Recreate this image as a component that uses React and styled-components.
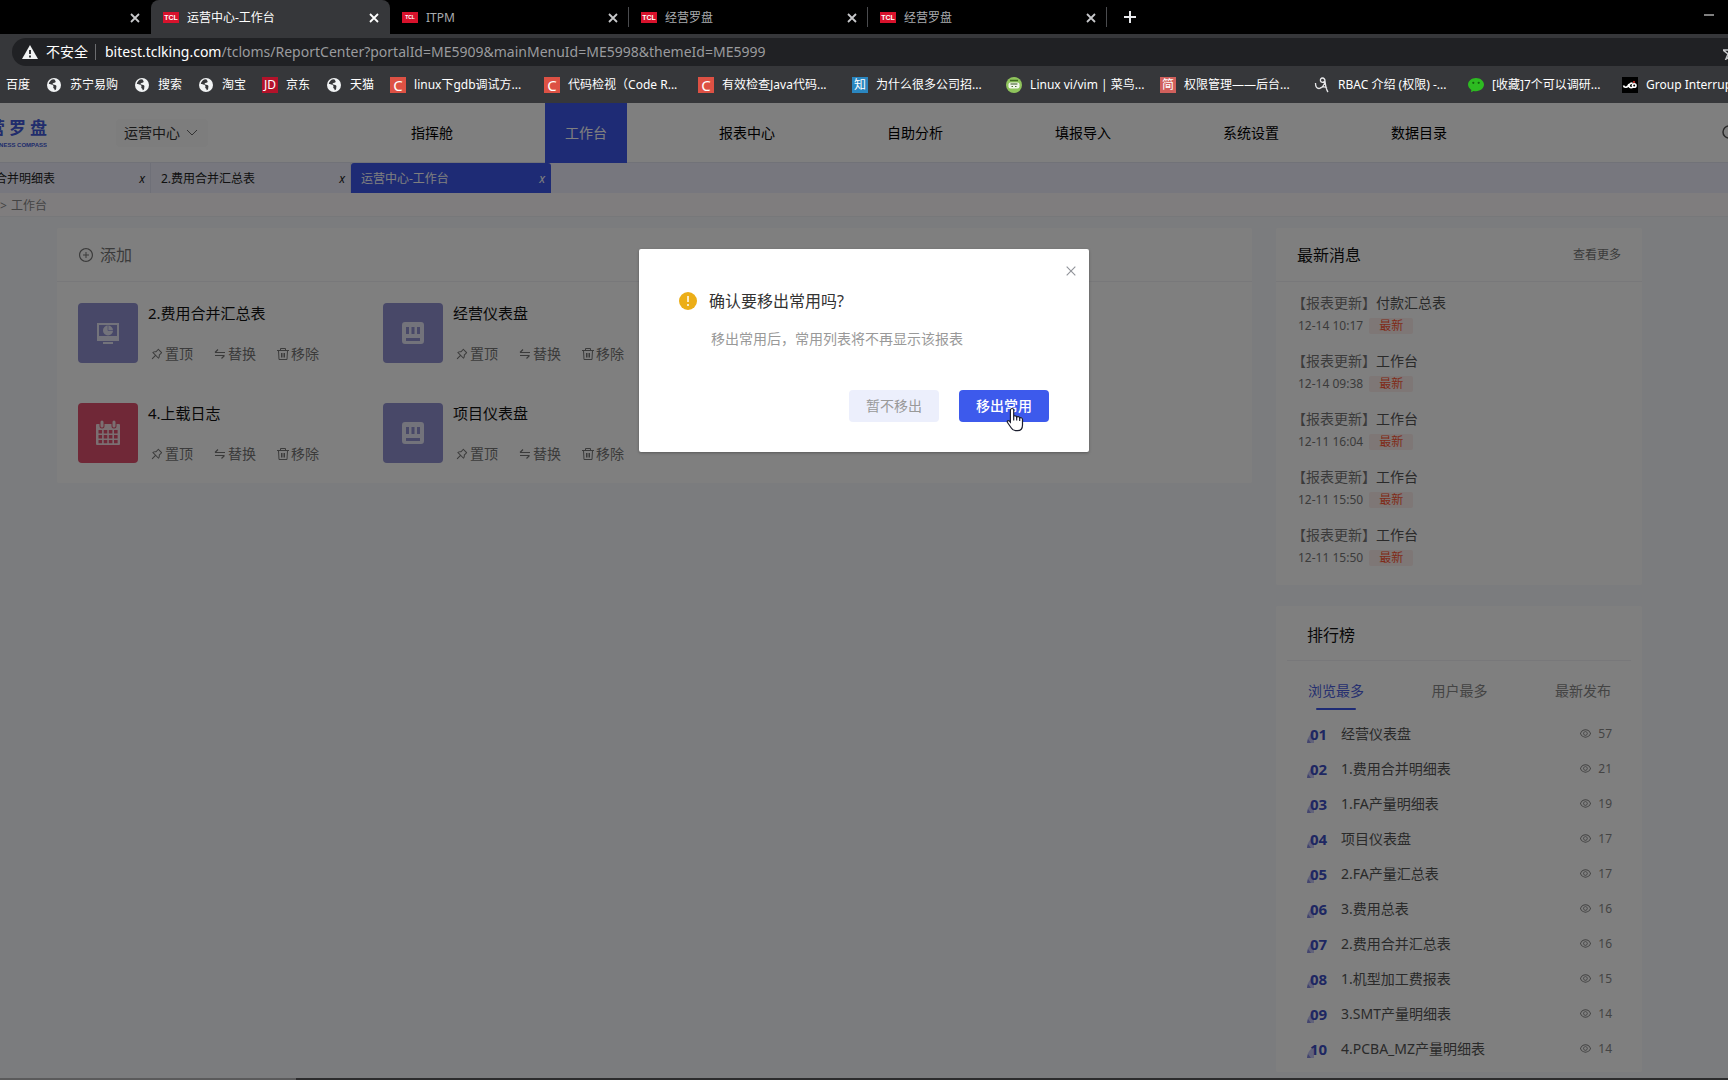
import React from 'react';
import styled, { createGlobalStyle } from 'styled-components';
import { AiOutlinePushpin, AiOutlineEye, AiOutlinePlusCircle, AiOutlineClose } from 'react-icons/ai';

const GlobalStyle = createGlobalStyle`
  * {
    box-sizing: border-box;
  }

  body {
    margin: 0;
    background: #2c2c2d;
    color: #333;
    font-family: 'Noto Sans', 'Noto Sans CJK SC', sans-serif;
    font-size: 14px;
    line-height: 20px;
    overflow: hidden;
  }

  button {
    padding: 0;
    border: 0;
    background: none;
    color: inherit;
    font: inherit;
    cursor: pointer;
  }

  a {
    color: inherit;
    text-decoration: none;
  }

  ul, ol, h2, h3, p {
    margin: 0;
    padding: 0;
    font-size: inherit;
    font-weight: inherit;
    list-style: none;
  }

  svg {
    display: block;
    flex: none;
  }
`;

const Window = styled.div`
  display: flex;
  flex-direction: column;
  min-height: 100vh;
  overflow: hidden;
`;

/* browser */

const Chrome = styled.header`
  background: #36373a;
  color: #fff;
  font-size: 12px;
  white-space: nowrap;
`;

const TabStrip = styled.div`
  display: flex;
  align-items: center;
  height: 34px;
  background: #000;
`;

const BrowserTab = styled.div`
  display: flex;
  align-items: center;
  gap: 8px;
  width: ${(p) => (p.$cut ? 151 : 239)}px;
  height: ${(p) => (p.$active ? 34 : 20)}px;
  padding: 1px 10px 0 12px;
  border-right: 1px solid ${(p) => (p.$line ? '#4a4b4e' : 'transparent')};
  border-radius: ${(p) => (p.$active ? '8px 8px 0 0' : '0')};
  background: ${(p) => (p.$active ? '#36373a' : 'transparent')};
  color: ${(p) => (p.$active ? '#fff' : '#a9abae')};
`;

const TabClose = styled.button`
  display: grid;
  place-items: center;
  width: 10px;
  height: 16px;
  margin-left: auto;
  color: ${(p) => (p.$active ? '#fff' : '#c8c9cb')};
`;

const NewTab = styled.button`
  margin-left: 17px;
`;

const Minimize = styled.button`
  margin: 0 14px 4px auto;
`;

const AddressRow = styled.div`
  padding: 4px 0 0 12px;
`;

const AddressBar = styled.div`
  display: flex;
  align-items: center;
  height: 28px;
  padding-left: 10px;
  border-radius: 14px 0 0 14px;
  background: #202124;
  font-size: 14px;
`;

const Unsafe = styled.span`
  margin: 0 9px 0 8px;
  padding-right: 7px;
  border-right: 1px solid #6b6c6f;
  line-height: 16px;
`;

const Url = styled.span`
  flex: 1;
  color: #9a9b9e;
`;

const UrlHost = styled.span`
  color: #fff;
`;

const Bookmarks = styled.nav`
  display: flex;
  align-items: center;
  gap: 16px;
  height: 37px;
  padding-left: 6px;
`;

const Bookmark = styled.a`
  display: flex;
  flex: none;
  align-items: center;
  gap: 8px;
`;

const BookmarkText = styled.span`
  width: ${(p) => (p.$wide ? '114px' : 'auto')};
`;

const Favicon = styled.span`
  display: grid;
  place-items: center;
  width: 16px;
  height: 16px;
  background: ${(p) => p.$color};
  color: #fff;
  font-size: ${(p) => p.$size || 12}px;
  line-height: 16px;
`;

const TclMark = styled.span`
  display: grid;
  place-items: center;
  width: 16px;
  height: 11px;
  background: #d8122c;
  color: #fff;
  font: bold ${(p) => (p.$small ? 5 : 7)}px/11px 'Liberation Sans', sans-serif;
`;

/* page */

const Page = styled.div`
  position: relative;
  flex: 1;
  background: #f7f9fc;
`;

const Header = styled.header`
  display: flex;
  align-items: center;
  height: 60px;
  border-bottom: 1px solid #e3e5f0;
  background: #fff;
`;

const Logo = styled.div`
  display: flex;
  flex-direction: column;
  align-items: flex-end;
  gap: 2px;
  width: 47px;
  overflow: hidden;
  color: #4259d8;
  white-space: nowrap;
`;

const LogoName = styled.div`
  display: flex;
  gap: 4px;
  font-size: 17px;
  font-weight: 700;
  line-height: 22px;
`;

const LogoSub = styled.div`
  font: bold 6px/8px 'Liberation Sans', sans-serif;
`;

const CenterPicker = styled.button`
  display: flex;
  align-items: center;
  gap: 6px;
  height: 28px;
  margin-left: 69px;
  padding: 0 10px 0 8px;
  border-radius: 4px;
  background: #fafafa;
`;

const MainNav = styled.nav`
  display: flex;
  flex: 1;
  gap: 72px;
  margin-left: 183px;
  white-space: nowrap;
`;

const NavLink = styled.a`
  height: 60px;
  padding: 0 20px;
  background: ${(p) => (p.$active ? '#3d57ea' : 'transparent')};
  color: ${(p) => (p.$active ? '#fff' : '#000')};
  line-height: 59px;
`;

const SearchButton = styled.button`
  width: 6px;
  overflow: hidden;
  color: #555;
`;

const PageTabs = styled.div`
  display: flex;
  height: 30px;
  margin-left: -49px;
  background: #eeeffc;
`;

const PageTabsBar = styled.div`
  overflow: hidden;
`;

const PageTab = styled.div`
  display: flex;
  align-items: center;
  justify-content: space-between;
  width: 200px;
  padding: 2px 5px 0 10px;
  border-right: 1px solid ${(p) => (p.$active ? 'transparent' : '#dfe1f0')};
  border-radius: ${(p) => (p.$active ? '3px 3px 0 0' : '0')};
  background: ${(p) => (p.$active ? '#3d57ea' : 'transparent')};
  color: ${(p) => (p.$active ? '#fff' : '#222')};
  font-size: 12px;
`;

const PageTabClose = styled.button`
  font-style: italic;
`;

const Breadcrumb = styled.div`
  display: flex;
  gap: 4px;
  height: 24px;
  margin-bottom: 11px;
  border-bottom: 1px solid #eef0f4;
  background: #fefbfd;
  color: #888;
  font-size: 12px;
  line-height: 26px;
`;

const Content = styled.main`
  display: grid;
  grid-template-columns: 1fr 366px;
  align-items: start;
  gap: 24px;
  margin: 0 86px 0 57px;
`;

const Card = styled.section`
  border-radius: 2px;
  background: #fff;
`;

const CardHead = styled.div`
  display: flex;
  align-items: center;
  justify-content: space-between;
  height: 54px;
  padding: 0 21px;
  border-bottom: 1px solid #f1f1f5;
`;

const CardTitle = styled.h2`
  color: #111;
  font-size: 16px;
`;

const AddButton = styled.button`
  display: flex;
  align-items: center;
  gap: 6px;
  color: #777;
  font-size: 16px;
`;

const MoreLink = styled.a`
  color: #777;
  font-size: 12px;
`;

const ReportGrid = styled.ul`
  display: grid;
  grid-template-columns: repeat(2, 305px);
  gap: 40px 0;
  padding: 21px 0 20px 21px;
`;

const Report = styled.li`
  display: flex;
  gap: 10px;
`;

const ReportIcon = styled.div`
  display: grid;
  place-items: center;
  width: 60px;
  height: 60px;
  border-radius: 4px;
  background: ${(p) => p.$color};
  color: ${(p) => p.$ink};
`;

const ReportBody = styled.div`
  display: flex;
  flex-direction: column;
  justify-content: space-between;
`;

const ReportName = styled.h3`
  color: #111;
  font-size: 15px;
`;

const ReportActions = styled.div`
  display: flex;
  gap: 20px;
  padding-left: 2px;
  line-height: 18px;
`;

const ActionButton = styled.button`
  display: flex;
  align-items: center;
  gap: 1px;
  color: #777;
`;

const Side = styled.aside`
  display: grid;
  gap: 21px;
`;

const NewsList = styled.ul`
  display: grid;
  gap: 12px;
  padding: 10px 16px 15px;
`;

const NewsTitle = styled.p`
  color: #555;
  line-height: 22px;
`;

const NewsKind = styled.span`
  color: #777;
`;

const NewsMeta = styled.p`
  display: flex;
  align-items: center;
  gap: 6px;
  height: 24px;
  padding-left: 6px;
  color: #777;
  font-size: 12px;
`;

const FreshBadge = styled.span`
  padding: 0 10px;
  border-radius: 2px;
  background: #fdeeed;
  color: #ff5733;
  line-height: 16px;
`;

const RankHead = styled.div`
  height: 55px;
  margin: 0 11px;
  padding-left: 20px;
  border-bottom: 1px solid #f1f1f5;
  line-height: 58px;
`;

const RankTabs = styled.div`
  display: flex;
  justify-content: space-between;
  padding: 20px 31px 0 32px;
`;

const RankTab = styled.button`
  display: grid;
  justify-items: center;
  align-content: start;
  gap: 7px;
  height: 35px;
  color: ${(p) => (p.$active ? '#4d5fe0' : '#888')};

  &::after {
    content: '';
    width: 40px;
    height: 2px;
    border-radius: 1px;
    background: ${(p) => (p.$active ? '#3d57ea' : 'transparent')};
  }
`;

const RankList = styled.ol`
  padding: 0 30px 6px 31px;
`;

const RankRow = styled.li`
  display: flex;
  align-items: center;
  height: 35px;
  color: #555;
`;

const RankNumber = styled.span`
  display: flex;
  align-items: center;
  width: 34px;
  color: #3d4fc4;
  font-size: 15px;
  font-weight: 700;
`;

const RankWedge = styled.svg`
  margin: 7px -4px 0 0;
`;

const RankViews = styled.span`
  display: flex;
  align-items: center;
  gap: 6px;
  margin-left: auto;
  color: #888;
  font-size: 12px;
`;

const BottomEdge = styled.div`
  height: 2px;
  background: linear-gradient(90deg, #5a5a5b 296px, #2c2c2d 296px);
`;

/* dialog */

const Mask = styled.div`
  position: absolute;
  inset: 0;
  display: flex;
  align-items: flex-start;
  justify-content: center;
  padding-top: 146px;
  background: rgba(0, 0, 0, 0.5);
`;

const Dialog = styled.div`
  position: relative;
  width: 450px;
  padding: 40px 40px 30px;
  border-radius: 2px;
  background: #fff;
  box-shadow: 0 1px 3px rgba(0, 0, 0, 0.3);
`;

const DialogClose = styled.button`
  position: absolute;
  top: 15px;
  right: 11px;
  color: #909399;
`;

const DialogTitle = styled.h2`
  display: flex;
  align-items: center;
  gap: 12px;
  color: #333;
  font-size: 16px;
  line-height: 24px;
`;

const DialogText = styled.p`
  margin: 16px 0 41px 32px;
  color: #999;
`;

const DialogFooter = styled.div`
  display: flex;
  justify-content: flex-end;
  gap: 20px;
`;

const DialogButton = styled.button`
  position: relative;
  width: 90px;
  height: 32px;
  border-radius: 4px;
  background: ${(p) => (p.$primary ? '#3d5aec' : '#eceffc')};
  color: ${(p) => (p.$primary ? '#fff' : '#999')};
  font-weight: ${(p) => (p.$primary ? 500 : 400)};
`;

const Pointer = styled.svg`
  position: absolute;
  top: 17px;
  left: 47px;
`;

function CrossIcon() {
  return (
    <svg width="10" height="10" viewBox="0 0 10 10" fill="none" stroke="currentColor" strokeWidth="1.800">
      <path d="M1 1l8 8M9 1L1 9" />
    </svg>
  );
}

function GlobeIcon() {
  return (
    <svg width="16" height="16" viewBox="0 0 16 16">
      <circle cx="8" cy="8" r="7" fill="#f1f3f4" />
      <path d="M6 2.500c-2 1.200-3 3-3.200 4.500 1.500.8 3.400.3 4.400 1.400.8 1-.4 1.700.2 2.600.6.7 1.300.4 1.200 2.300 2.200-.6 1.400-2.500 1.800-3.600.5-1.200-1-1.900-2.200-2-1.400-.1-1.900-.3-1.500-1.200.6-1 2.500-.3 2.900-1.500.2-.8-.5-1.600-1.400-2.700z" fill="#36373a" />
    </svg>
  );
}

function RobotIcon() {
  return (
    <svg width="16" height="16" viewBox="0 0 16 16">
      <circle cx="8" cy="8" r="8" fill="#8fc45c" />
      <path d="M4 3.500h8" stroke="#3f6b22" strokeWidth="1.500" />
      <rect x="2.500" y="5.500" width="11" height="6" rx="2" fill="#f1f6ea" />
      <path d="M4.500 7h7" stroke="#4d6b3a" strokeWidth="1.200" />
      <path d="M5.500 9.500h1.500M9 9.500h1.500" stroke="#4d7331" strokeWidth="1.200" />
    </svg>
  );
}

function ScribbleIcon() {
  return (
    <svg width="16" height="16" viewBox="0 0 16 16" fill="none" stroke="#e8e8ea" strokeWidth="1.300">
      <path d="M1.500 6c0 3 1 5.500 3.500 5.500S10.500 8 11 4.500C11.200 2.500 10 1 8.500 1S6 2.500 6.500 4s3 2 4.500 0c.5 4 .8 8 3 11M6 11c3-1.500 5-1.500 7 0" />
    </svg>
  );
}

function WechatIcon() {
  return (
    <svg width="16" height="16" viewBox="0 0 16 16">
      <path d="M8 1c4.400 0 8 2.900 8 6.600s-3.600 6.600-8 6.600c-.9 0-1.700-.1-2.500-.3L3 15.200l.4-2.300C1.300 11.700 0 9.800 0 7.600 0 3.900 3.600 1 8 1z" fill="#2dbb21" />
      <circle cx="5.300" cy="5.800" r="1.100" fill="#14610e" />
      <circle cx="10.700" cy="5.800" r="1.100" fill="#14610e" />
    </svg>
  );
}

function CurlIcon() {
  return (
    <svg width="16" height="16" viewBox="0 0 16 16" fill="none" stroke="#fff" strokeWidth="1.600">
      <rect width="16" height="16" fill="#000" stroke="none" />
      <path d="M1.500 8.500c.5 2.500 4.500 2.500 5.500-1.500M7 10c0-3 1.500-4 3.500-4M7 9.500c1 1.500 3 1.500 4 .5M14 8.500a1.800 1.800 0 1 1-3.600 0 1.800 1.800 0 0 1 3.600 0z" />
      <circle cx="12" cy="5" r="1" fill="#e0352b" stroke="none" />
    </svg>
  );
}

function SwapIcon() {
  return (
    <svg width="14" height="14" viewBox="0 0 14 14" fill="none" stroke="currentColor" strokeWidth="1.200">
      <path d="M2 5.500h10M2 5.500l3-3M11.500 8.500H2M11.500 8.500l-3 3" />
    </svg>
  );
}

function BinIcon() {
  return (
    <svg width="14" height="14" viewBox="0 0 14 14" fill="none" stroke="currentColor">
      <path d="M1 3.500h12M4.500 3.500v-2h5v2M2.500 3.500l.5 9h8l.5-9M5.500 6v4.500M7 6v4.500M8.500 6v4.500" />
    </svg>
  );
}

function ScreenIcon() {
  return (
    <svg width="24" height="24" viewBox="0 0 24 24" fill="currentColor">
      <path fillRule="evenodd" d="M1 2h22v18H1zM3 4v11h18V4z" />
      <path d="M7 21h10v2H7z" />
      <circle cx="12" cy="9.500" r="5" />
      <path d="M12 9.500V4.500M12 9.500h5" stroke="#9090d8" strokeWidth=".7" />
    </svg>
  );
}

function MeterIcon() {
  return (
    <svg width="24" height="24" viewBox="0 0 24 24" fill="currentColor">
      <path fillRule="evenodd" d="M4 1h16a3 3 0 0 1 3 3v16a3 3 0 0 1-3 3H4a3 3 0 0 1-3-3V4a3 3 0 0 1 3-3zM5 6v7h3V6zM10.500 6v7h3V6zM16 6v7h3V6zM5 17v3h14v-3z" />
    </svg>
  );
}

function CalendarIcon() {
  return (
    <svg width="26" height="26" viewBox="0 0 26 26" fill="currentColor">
      <path fillRule="evenodd" d="M2 4h22a1 1 0 0 1 1 1v19a1 1 0 0 1-1 1H2a1 1 0 0 1-1-1V5a1 1 0 0 1 1-1zM3.500 10v3.500h3.600V10zM8.700 10v3.500h3.600V10zM13.800 10v3.500h3.600V10zM19 10v3.500h3.600V10zM3.500 15v3.500h3.600V15zM8.700 15v3.500h3.600V15zM13.800 15v3.500h3.600V15zM19 15v3.500h3.600V15zM3.500 20v3.200h3.600V20zM8.700 20v3.200h3.600V20zM13.800 20v3.200h3.600V20zM19 20v3.200h3.600V20z" />
      <path d="M7 2v4M19 2v4" stroke="#e0506e" strokeWidth="5" strokeLinecap="round" />
      <path d="M7 2v4M19 2v4" stroke="currentColor" strokeWidth="3" strokeLinecap="round" />
    </svg>
  );
}

const browserTabs = [
  { title: '运营中心-工作台', active: true },
  { title: 'ITPM', small: true, line: true },
  { title: '经营罗盘', line: true },
  { title: '经营罗盘', line: true },
];

const csdn = <Favicon $color="#dd5144" $size={15}>C</Favicon>;

const bookmarks = [
  { text: '百度' },
  { text: '苏宁易购', icon: <GlobeIcon /> },
  { text: '搜索', icon: <GlobeIcon /> },
  { text: '淘宝', icon: <GlobeIcon /> },
  { text: '京东', icon: <Favicon $color="#b3122a">JD</Favicon> },
  { text: '天猫', icon: <GlobeIcon /> },
  { text: 'linux下gdb调试方...', icon: csdn, wide: true },
  { text: '代码检视（Code R...', icon: csdn, wide: true },
  { text: '有效检查Java代码...', icon: csdn, wide: true },
  { text: '为什么很多公司招...', icon: <Favicon $color="#2a86c0">知</Favicon>, wide: true },
  { text: 'Linux vi/vim | 菜鸟...', icon: <RobotIcon />, wide: true },
  { text: '权限管理——后台...', icon: <Favicon $color="#d1605c">简</Favicon>, wide: true },
  { text: 'RBAC 介绍 (权限) -...', icon: <ScribbleIcon />, wide: true },
  { text: '[收藏]7个可以调研...', icon: <WechatIcon />, wide: true },
  { text: 'Group Interrupt', icon: <CurlIcon />, wide: true },
];

const navItems = ['指挥舱', '工作台', '报表中心', '自助分析', '填报导入', '系统设置', '数据目录'];

const pageTabs = ['1.费用合并明细表', '2.费用合并汇总表', '运营中心-工作台'];

const reports = [
  { name: '2.费用合并汇总表', icon: <ScreenIcon />, color: '#9090d0', ink: '#e6e6f6' },
  { name: '经营仪表盘', icon: <MeterIcon />, color: '#9090d0', ink: '#e6e6f6' },
  { name: '4.上载日志', icon: <CalendarIcon />, color: '#e0506e', ink: '#f6dfe4' },
  { name: '项目仪表盘', icon: <MeterIcon />, color: '#9090d0', ink: '#e6e6f6' },
];

const news = [
  { title: '付款汇总表', time: '12-14 10:17' },
  { title: '工作台', time: '12-14 09:38' },
  { title: '工作台', time: '12-11 16:04' },
  { title: '工作台', time: '12-11 15:50' },
  { title: '工作台', time: '12-11 15:50' },
];

const ranking = [
  ['经营仪表盘', 57],
  ['1.费用合并明细表', 21],
  ['1.FA产量明细表', 19],
  ['项目仪表盘', 17],
  ['2.FA产量汇总表', 17],
  ['3.费用总表', 16],
  ['2.费用合并汇总表', 16],
  ['1.机型加工费报表', 15],
  ['3.SMT产量明细表', 14],
  ['4.PCBA_MZ产量明细表', 14],
];

function BrowserChrome() {
  return (
    <Chrome>
      <TabStrip>
        <BrowserTab $cut>
          <TabClose aria-label="关闭"><CrossIcon /></TabClose>
        </BrowserTab>
        {browserTabs.map((tab, i) => (
          <BrowserTab key={i} $active={tab.active} $line={tab.line}>
            <TclMark $small={tab.small}>TCL</TclMark>
            <span>{tab.title}</span>
            <TabClose $active={tab.active} aria-label="关闭"><CrossIcon /></TabClose>
          </BrowserTab>
        ))}
        <NewTab aria-label="新标签页">
          <svg width="12" height="12" viewBox="0 0 12 12" stroke="#e8eaed" strokeWidth="2">
            <path d="M6 0v12M0 6h12" />
          </svg>
        </NewTab>
        <Minimize aria-label="最小化">
          <svg width="10" height="2"><path d="M0 1h10" stroke="#fff" /></svg>
        </Minimize>
      </TabStrip>
      <AddressRow>
        <AddressBar>
          <svg width="16" height="14" viewBox="0 0 16 14">
            <path d="M8 0l8 14H0z" fill="#f1f3f4" />
            <path d="M8 5v4M8 10.500v2" stroke="#202124" strokeWidth="1.800" />
          </svg>
          <Unsafe>不安全</Unsafe>
          <Url>
            <UrlHost>bitest.tclking.com</UrlHost>
            /tcloms/ReportCenter?portalId=ME5909&amp;mainMenuId=ME5998&amp;themeId=ME5999
          </Url>
          <svg width="5" height="16" viewBox="0 0 5 16" fill="none" stroke="#c8c9cb" strokeWidth="1.500">
            <path d="M8 1L6 6H0l5 4-2 5 5-3" />
          </svg>
        </AddressBar>
      </AddressRow>
      <Bookmarks>
        {bookmarks.map((item) => (
          <Bookmark key={item.text} href="#">
            {item.icon}
            <BookmarkText $wide={item.wide}>{item.text}</BookmarkText>
          </Bookmark>
        ))}
      </Bookmarks>
    </Chrome>
  );
}

function PageHeader() {
  return (
    <>
      <Header>
        <Logo>
          <LogoName>
            <span>营</span>
            <span>罗</span>
            <span>盘</span>
          </LogoName>
          <LogoSub>BUSINESS COMPASS</LogoSub>
        </Logo>
        <CenterPicker>
          运营中心
          <svg width="12" height="8" viewBox="0 0 12 8" fill="none" stroke="#666">
            <path d="M1 1l5 5 5-5" />
          </svg>
        </CenterPicker>
        <MainNav>
          {navItems.map((item) => (
            <NavLink key={item} href="#" $active={item === '工作台'}>{item}</NavLink>
          ))}
        </MainNav>
        <SearchButton aria-label="搜索">
          <svg width="16" height="16" viewBox="0 0 16 16" fill="none" stroke="currentColor" strokeWidth="1.500">
            <circle cx="7" cy="7" r="6" />
            <path d="M11 11l4 4" />
          </svg>
        </SearchButton>
      </Header>
      <PageTabsBar>
        <PageTabs>
          {pageTabs.map((tab, i) => (
            <PageTab key={tab} $active={i === 2}>
              {tab}
              <PageTabClose>x</PageTabClose>
            </PageTab>
          ))}
        </PageTabs>
      </PageTabsBar>
      <Breadcrumb>
        <span>&gt;</span>
        <span>工作台</span>
      </Breadcrumb>
    </>
  );
}

function FavoriteReports() {
  return (
    <Card>
      <CardHead>
        <AddButton>
          <AiOutlinePlusCircle size={16} />
          添加
        </AddButton>
      </CardHead>
      <ReportGrid>
        {reports.map((report) => (
          <Report key={report.name}>
            <ReportIcon $color={report.color} $ink={report.ink}>{report.icon}</ReportIcon>
            <ReportBody>
              <ReportName>{report.name}</ReportName>
              <ReportActions>
                <ActionButton><AiOutlinePushpin size={14} />置顶</ActionButton>
                <ActionButton><SwapIcon />替换</ActionButton>
                <ActionButton><BinIcon />移除</ActionButton>
              </ReportActions>
            </ReportBody>
          </Report>
        ))}
      </ReportGrid>
    </Card>
  );
}

function LatestNews() {
  return (
    <Card>
      <CardHead>
        <CardTitle>最新消息</CardTitle>
        <MoreLink href="#">查看更多</MoreLink>
      </CardHead>
      <NewsList>
        {news.map((item, i) => (
          <li key={i}>
            <NewsTitle><NewsKind>【报表更新】</NewsKind>{item.title}</NewsTitle>
            <NewsMeta>
              {item.time}
              <FreshBadge>最新</FreshBadge>
            </NewsMeta>
          </li>
        ))}
      </NewsList>
    </Card>
  );
}

function Ranking() {
  return (
    <Card>
      <RankHead>
        <CardTitle>排行榜</CardTitle>
      </RankHead>
      <RankTabs>
        <RankTab $active>浏览最多</RankTab>
        <RankTab>用户最多</RankTab>
        <RankTab>最新发布</RankTab>
      </RankTabs>
      <RankList>
        {ranking.map(([name, views], i) => (
          <RankRow key={name}>
            <RankNumber>
              <RankWedge width="7" height="11" viewBox="0 0 7 11">
                <path d="M7 0v11H0C0 6 3 2 7 0z" fill="#c3c5f5" />
                <path d="M0 11l1-4 3 4z" fill="#8488dc" />
              </RankWedge>
              {String(i + 1).padStart(2, '0')}
            </RankNumber>
            <span>{name}</span>
            <RankViews>
              <AiOutlineEye size={13} />
              {views}
            </RankViews>
          </RankRow>
        ))}
      </RankList>
    </Card>
  );
}

function RemoveDialog() {
  return (
    <Mask>
      <Dialog role="dialog" aria-labelledby="remove-title">
        <DialogClose aria-label="关闭"><AiOutlineClose size={14} /></DialogClose>
        <DialogTitle id="remove-title">
          <svg width="18" height="18" viewBox="0 0 18 18">
            <circle cx="9" cy="9" r="9" fill="#ecae17" />
            <path d="M9 4v6M9 12v2" stroke="#fff" strokeWidth="1.500" />
          </svg>
          确认要移出常用吗?
        </DialogTitle>
        <DialogText>移出常用后，常用列表将不再显示该报表</DialogText>
        <DialogFooter>
          <DialogButton>暂不移出</DialogButton>
          <DialogButton $primary>
            移出常用
            <Pointer width="19" height="25" viewBox="0 0 19 25">
              <path
                d="M6 1.500c1 0 1.700.8 1.700 1.800v6c.3-.8 2.800-.8 3 .8.5-.9 2.900-.7 3 .9.7-.8 2.800-.4 2.800 1.500v5.500c0 3.200-1.700 5.700-5 5.700H9.500c-2 0-3.200-1-4.200-2.700L1.500 15.500c-.8-1.500.8-2.600 1.900-1.500l1 1.200V3.300c0-1 .6-1.800 1.600-1.800z"
                fill="#fff"
                stroke="#1b1d2e"
                strokeWidth="1.200"
              />
              <path d="M7.700 9v4.500M10.700 10v3.500M13.700 11v3" stroke="#1b1d2e" strokeWidth="1.200" />
            </Pointer>
          </DialogButton>
        </DialogFooter>
      </Dialog>
    </Mask>
  );
}

export default function App() {
  return (
    <Window>
      <GlobalStyle />
      <BrowserChrome />
      <Page>
        <PageHeader />
        <Content>
          <FavoriteReports />
          <Side>
            <LatestNews />
            <Ranking />
          </Side>
        </Content>
        <RemoveDialog />
      </Page>
      <BottomEdge />
    </Window>
  );
}
